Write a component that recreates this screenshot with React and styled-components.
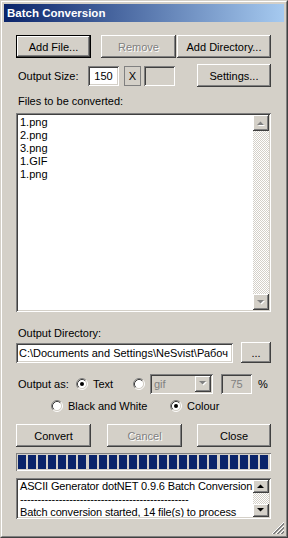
import React from 'react';
import styled, { createGlobalStyle, css } from 'styled-components';

const GlobalStyle = createGlobalStyle`
  html, body { margin: 0; padding: 0; background: #d4d0c8; }
  body { font-family: "Liberation Sans", Arial, sans-serif; font-size: 11px; color: #000; }
  * { box-sizing: border-box; }
`;

const raised = css`
  box-shadow: inset -1px -1px #404040, inset 1px 1px #fff, inset -2px -2px #808080, inset 2px 2px #d4d0c8;
`;
const sunken = css`
  box-shadow: inset 1px 1px #808080, inset -1px -1px #fff, inset 2px 2px #404040, inset -2px -2px #d4d0c8;
`;

const Window = styled.div`
  width: 288px;
  height: 538px;
  overflow: hidden;
  border: 1px solid;
  border-color: #d4d0c8 #404040 #404040 #d4d0c8;
  display: flex;
`;
const Frame = styled.div`
  flex: 1;
  min-width: 0;
  display: flex;
  flex-direction: column;
  border: 1px solid;
  border-color: #fff #808080 #808080 #fff;
  padding: 2px;
  background: #d4d0c8;
`;
const TitleBar = styled.div`
  height: 18px;
  flex: none;
  display: flex;
  align-items: center;
  padding-left: 3px;
  background: linear-gradient(to right, #0a246a, #a6caf0);
  color: #fff;
  font-weight: bold;
  font-size: 11.5px;
`;
const Client = styled.div`
  flex: 1;
  min-height: 0;
  min-width: 0;
  display: flex;
  flex-direction: column;
  padding: 0 13px 0 12px;
`;
const Row = styled.div`
  display: flex;
  align-items: center;
  flex: none;
  height: ${p => p.$h}px;
  margin-top: ${p => p.$mt}px;
`;
const Label = styled.span`
  flex: none;
  padding-left: 2px;
  width: ${p => (p.$w ? `${p.$w}px` : 'auto')};
  white-space: nowrap;
`;
const Button = styled.button`
  flex: none;
  width: ${p => p.$w}px;
  height: ${p => p.$h || 23}px;
  margin-left: ${p => p.$ml || 0}px;
  border: 0;
  padding: 0;
  background: #d4d0c8;
  font: inherit;
  color: #000;
  ${raised}
  ${p => p.$default && css`
    box-shadow: inset 0 0 0 1px #000, inset -2px -2px #404040, inset 2px 2px #fff, inset -3px -3px #808080;
  `}
  &:disabled {
    color: #808080;
    text-shadow: 1px 1px 0 #fff;
  }
`;
const Field = styled.div`
  flex: none;
  width: ${p => p.$w}px;
  height: ${p => p.$h || 20}px;
  margin-left: ${p => p.$ml || 0}px;
  background: ${p => (p.$disabled ? '#d4d0c8' : '#fff')};
  color: ${p => (p.$disabled ? '#808080' : '#000')};
  ${sunken}
  display: flex;
  align-items: center;
  justify-content: ${p => (p.$center ? 'center' : 'flex-start')};
  padding: 0 3px;
  overflow: hidden;
  white-space: nowrap;
`;
const Combo = styled(Field)`
  justify-content: space-between;
  padding: 2px 2px 2px 4px;
`;
const XBox = styled.div`
  flex: none;
  width: 17px;
  height: 20px;
  margin-left: 5px;
  border: 1px solid #808080;
  display: flex;
  align-items: center;
  justify-content: center;
`;
const ListBox = styled.div`
  flex: none;
  min-width: 0;
  height: ${p => p.$h}px;
  margin-top: ${p => p.$mt}px;
  display: flex;
  background: #fff;
  padding: 2px;
  ${sunken}
`;
const ListItems = styled.div`
  flex: 1;
  min-width: 0;
  padding: ${p => (p.$pt ? 1 : 0)}px 2px 0;
  line-height: 13px;
  letter-spacing: ${p => (p.$tight ? '-0.15px' : 'normal')};
  white-space: nowrap;
  overflow: hidden;
`;
const ScrollBar = styled.div`
  width: 16px;
  flex: none;
  display: flex;
  flex-direction: column;
`;
const ScrollTrack = styled.div`
  flex: 1;
  background: conic-gradient(#fff 25%, #d4d0c8 0 50%, #fff 0 75%, #d4d0c8 0) 0 0 / 2px 2px;
`;
const ScrollBtn = styled.div`
  flex: none;
  width: 16px;
  height: ${p => p.$h}px;
  background: #d4d0c8;
  ${raised}
  display: flex;
  align-items: center;
  justify-content: center;
`;
const RadioWrap = styled.div`
  flex: none;
  display: flex;
  align-items: center;
  gap: 5px;
  width: ${p => (p.$w ? `${p.$w}px` : 'auto')};
  margin-left: ${p => p.$ml || 0}px;
`;
const Progress = styled.div`
  flex: none;
  height: 18px;
  margin-top: 6px;
  padding: 2px 3px 2px 2px;
  box-shadow: inset 1px 1px #808080, inset -1px -1px #fff;
  display: flex;
  justify-content: space-between;
`;
const Block = styled.div`
  width: 8px;
  background: #0a246a;
`;
const GripRow = styled.div`
  margin-top: auto;
  margin-right: -13px;
  display: flex;
  justify-content: flex-end;
  flex: none;
`;
const Percent = styled.span`
  margin-left: 6px;
`;

const Arrow = ({ dir, disabled }) => {
  const pts = dir === 'up' ? '0,4 7,4 3.5,0.5' : '0,0 7,0 3.5,3.5';
  return (
    <svg width="8" height="5" viewBox="0 0 8 5" style={{ overflow: 'visible' }}>
      {disabled && (
        <polygon points={pts} fill="#fff" transform="translate(1,1)" />
      )}
      <polygon points={pts} fill={disabled ? '#808080' : '#000'} />
    </svg>
  );
};

const Radio = ({ checked }) => (
  <svg width="12" height="12" viewBox="0 0 12 12">
    <circle cx="6" cy="6" r="4.5" fill="#fff" />
    <path d="M2.11 9.89A5.5 5.5 0 0 1 9.89 2.11" stroke="#808080" fill="none" />
    <path d="M9.89 2.11A5.5 5.5 0 0 1 2.11 9.89" stroke="#fff" fill="none" />
    <path d="M2.82 9.18A4.5 4.5 0 0 1 9.18 2.82" stroke="#404040" fill="none" />
    <path d="M9.18 2.82A4.5 4.5 0 0 1 2.82 9.18" stroke="#d4d0c8" fill="none" />
    {checked && <circle cx="6" cy="6" r="2" fill="#000" />}
  </svg>
);

const Grip = () => (
  <svg width="13" height="13" viewBox="0 0 13 13">
    {[1, 5, 9].map(s => (
      <g key={s}>
        <line x1={s} y1="13" x2="13" y2={s} stroke="#fff" />
        <line x1={s + 1} y1="13" x2="13" y2={s + 1} stroke="#808080" />
        <line x1={s + 2} y1="13" x2="13" y2={s + 2} stroke="#808080" />
      </g>
    ))}
  </svg>
);

const files = ['1.png', '2.png', '3.png', '1.GIF', '1.png'];

export default function App() {
  return (
    <>
      <GlobalStyle />
      <Window>
        <Frame>
          <TitleBar>Batch Conversion</TitleBar>
          <Client>
            <Row $h={23} $mt={13}>
              <Button $w={75} $default>Add File...</Button>
              <Button $w={75} $ml={10} disabled>Remove</Button>
              <Button $w={94} $ml={1}>Add Directory...</Button>
            </Row>
            <Row $h={23} $mt={6}>
              <Label $w={72}>Output Size:</Label>
              <Field $w={31} $center>150</Field>
              <XBox>X</XBox>
              <Field $w={31} $ml={3} $disabled />
              <Button $w={74} $ml={22}>Settings...</Button>
            </Row>
            <Row $h={13} $mt={7}>
              <Label>Files to be converted:</Label>
            </Row>
            <ListBox $h={199} $mt={6}>
              <ListItems $pt>
                {files.map((f, i) => (
                  <div key={i}>{f}</div>
                ))}
              </ListItems>
              <ScrollBar>
                <ScrollBtn $h={16}><Arrow dir="up" disabled /></ScrollBtn>
                <ScrollTrack />
                <ScrollBtn $h={16}><Arrow dir="down" disabled /></ScrollBtn>
              </ScrollBar>
            </ListBox>
            <Row $h={13} $mt={14}>
              <Label>Output Directory:</Label>
            </Row>
            <Row $h={21} $mt={3}>
              <Field $w={217}>C:\Documents and Settings\NeSvist\Рабоч</Field>
              <Button $w={30} $h={21} $ml={8}>...</Button>
            </Row>
            <Row $h={21} $mt={10}>
              <Label $w={60}>Output as:</Label>
              <RadioWrap $w={57}>
                <Radio checked />
                <span>Text</span>
              </RadioWrap>
              <Radio />
              <Combo $w={63} $ml={5} $disabled>
                <span>gif</span>
                <ScrollBtn $h={16}><Arrow dir="down" disabled /></ScrollBtn>
              </Combo>
              <Field $w={31} $ml={8} $center $disabled>75</Field>
              <Percent>%</Percent>
            </Row>
            <Row $h={14} $mt={5}>
              <RadioWrap $w={119} $ml={35}>
                <Radio />
                <span>Black and White</span>
              </RadioWrap>
              <RadioWrap>
                <Radio checked />
                <span>Colour</span>
              </RadioWrap>
            </Row>
            <Row $h={23} $mt={11}>
              <Button $w={75}>Convert</Button>
              <Button $w={75} $ml={16} disabled>Cancel</Button>
              <Button $w={74} $ml={15}>Close</Button>
            </Row>
            <Progress>
              {Array.from({ length: 25 }).map((_, i) => (
                <Block key={i} />
              ))}
            </Progress>
            <ListBox $h={41} $mt={7}>
              <ListItems $tight>
                <div>ASCII Generator dotNET 0.9.6 Batch Conversion</div>
                <div>{'-'.repeat(48)}</div>
                <div>Batch conversion started, 14 file(s) to process</div>
              </ListItems>
              <ScrollBar>
                <ScrollBtn $h={13}><Arrow dir="up" /></ScrollBtn>
                <ScrollTrack />
                <ScrollBtn $h={13}><Arrow dir="down" /></ScrollBtn>
              </ScrollBar>
            </ListBox>
            <GripRow>
              <Grip />
            </GripRow>
          </Client>
        </Frame>
      </Window>
    </>
  );
}
